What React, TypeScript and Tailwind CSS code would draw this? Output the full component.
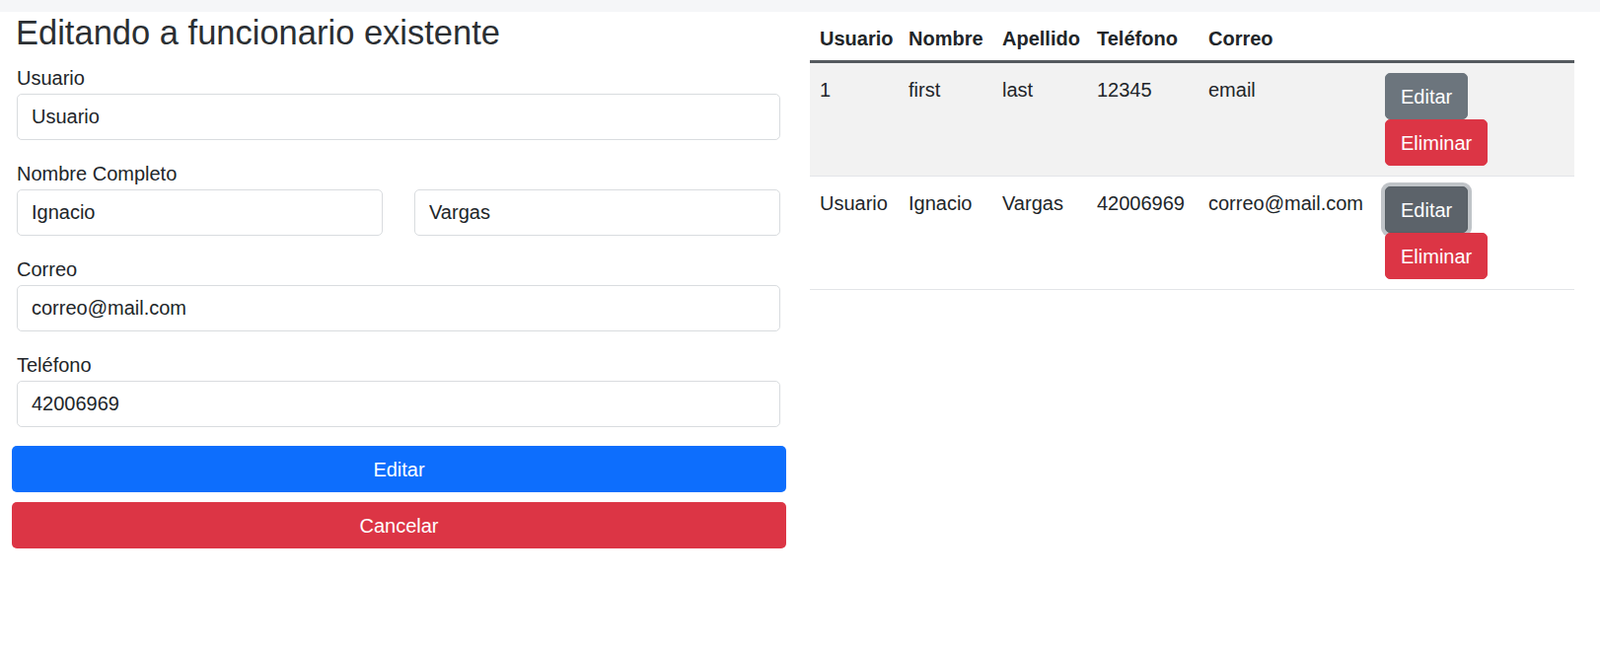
import { useState } from "react";

type Funcionario = {
  usuario: string;
  nombre: string;
  apellido: string;
  telefono: string;
  correo: string;
};

const rows: Funcionario[] = [
  { usuario: "1", nombre: "first", apellido: "last", telefono: "12345", correo: "email" },
  { usuario: "Usuario", nombre: "Ignacio", apellido: "Vargas", telefono: "42006969", correo: "correo@mail.com" },
];

const inputCls =
  "block w-full h-[47px] mt-px rounded-[5px] border border-[#d9dcdf] bg-white pl-[14px] pr-3 text-[20px] text-[#212529] outline-none";

function Field({ label, value }: { label: string; value: string }) {
  return (
    <div className="mb-[19px]">
      <label className="block h-[30px] leading-[30px] text-[20px] text-[#212529]">{label}</label>
      <input className={inputCls} defaultValue={value} />
    </div>
  );
}

export default function App() {
  const [editing] = useState(1);

  return (
    <div className="w-[1622px] h-[662px] bg-white font-['Liberation_Sans',Arial,sans-serif] text-[#212529]">
      <div className="h-3 bg-[#f5f6f8]" />

      <div className="flex">
        {/* formulario */}
        <div className="w-[809px] px-3">
          <h2 className="pl-[4px] mb-[10px] text-[34.5px] leading-[42px] font-normal text-[#2b2f33]">
            Editando a funcionario existente
          </h2>

          <div className="pl-[5px] pr-[6px]">
            <Field label="Usuario" value="Usuario" />

            <div className="mb-[19px]">
              <label className="block h-[30px] leading-[30px] text-[20px]">Nombre Completo</label>
              <div className="grid grid-cols-2 gap-8">
                <input className={inputCls} defaultValue="Ignacio" />
                <input className={inputCls} defaultValue="Vargas" />
              </div>
            </div>

            <Field label="Correo" value="correo@mail.com" />
            <Field label="Teléfono" value="42006969" />
          </div>

          <button
            type="button"
            className="block w-full h-[47px] rounded-[5px] bg-[#0d6efd] text-[20px] text-white"
          >
            Editar
          </button>
          <button
            type="button"
            className="mt-[10px] block w-full h-[47px] rounded-[5px] bg-[#dc3545] text-[20px] text-white"
          >
            Cancelar
          </button>
        </div>

        {/* tabla */}
        <div className="pl-3">
          <table className="w-[775px] table-fixed border-collapse text-[20px] leading-[30px]">
            <colgroup>
              <col className="w-[90px]" />
              <col className="w-[95px]" />
              <col className="w-[96px]" />
              <col className="w-[113px]" />
              <col className="w-[179px]" />
              <col />
            </colgroup>
            <thead>
              <tr className="border-b-[3px] border-[#555a5f] text-left">
                {["Usuario", "Nombre", "Apellido", "Teléfono", "Correo", ""].map((h, i) => (
                  <th key={i} className="px-[10px] pt-3 pb-[7px] font-bold whitespace-nowrap">
                    {h}
                  </th>
                ))}
              </tr>
            </thead>
            <tbody>
              {rows.map((r, i) => (
                <tr key={i} className={`border-b border-[#e3e5e8] align-top ${i % 2 === 0 ? "bg-[#f2f2f2]" : "bg-white"}`}>
                  <td className="px-[10px] pt-3 whitespace-nowrap">{r.usuario}</td>
                  <td className="px-[10px] pt-3 whitespace-nowrap">{r.nombre}</td>
                  <td className="px-[10px] pt-3 whitespace-nowrap">{r.apellido}</td>
                  <td className="px-[10px] pt-3 whitespace-nowrap">{r.telefono}</td>
                  <td className="px-[10px] pt-3 whitespace-nowrap">{r.correo}</td>
                  <td className="px-[10px] py-[10px]">
                    <div className="flex flex-col items-start">
                      <button
                        type="button"
                        className={
                          i === editing
                            ? "h-[47px] px-[15px] rounded-[5px] border border-[#565e64] bg-[#5c636a] text-white shadow-[0_0_0_4px_rgba(130,138,145,0.5)]"
                            : "h-[47px] px-[15px] rounded-[5px] border border-[#6c757d] bg-[#6c757d] text-white"
                        }
                      >
                        Editar
                      </button>
                      <button
                        type="button"
                        className="h-[47px] px-[15px] rounded-[5px] border border-[#dc3545] bg-[#dc3545] text-white"
                      >
                        Eliminar
                      </button>
                    </div>
                  </td>
                </tr>
              ))}
            </tbody>
          </table>
        </div>
      </div>
    </div>
  );
}
